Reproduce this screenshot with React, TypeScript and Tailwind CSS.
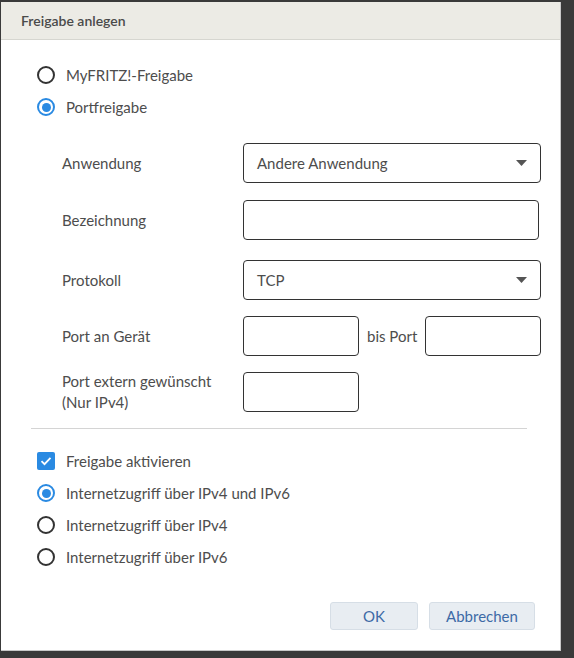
import { ReactNode } from 'react'

function Radio({ checked, children }: { checked?: boolean; children: ReactNode }) {
  return (
    <label className="flex h-8 items-center gap-[11px]">
      <span
        className={`flex h-[18px] w-[18px] items-center justify-center rounded-full border-2 ${
          checked ? 'border-[#2a8ae2]' : 'border-[#333]'
        }`}
      >
        {checked && <span className="h-[9px] w-[9px] rounded-full bg-[#2a8ae2]" />}
      </span>
      <span>{children}</span>
    </label>
  )
}

function Checkbox({ children }: { children: ReactNode }) {
  return (
    <label className="flex h-8 items-center gap-[11px]">
      <span className="flex h-[18px] w-[18px] items-center justify-center rounded-[2px] bg-[#2a8ae2]">
        <svg width="12" height="10" viewBox="0 0 12 10" fill="none">
          <path d="M1.5 5.2 4.5 8.2 10.5 1.8" stroke="white" strokeWidth="1.8" />
        </svg>
      </span>
      <span>{children}</span>
    </label>
  )
}

function Select({ value }: { value: string }) {
  return (
    <div className="flex h-10 w-[298px] items-center justify-between rounded-[4px] border border-[#333] pl-[13px] pr-[13px]">
      <span>{value}</span>
      <svg width="11" height="6" viewBox="0 0 11 6">
        <path d="M0 0h11L5.5 6z" fill="#555" />
      </svg>
    </div>
  )
}

function Field({ width }: { width: string }) {
  return <div className={`h-10 rounded-[4px] border border-[#333] ${width}`} />
}

function Row({ label, children, className = '' }: { label: ReactNode; children: ReactNode; className?: string }) {
  return (
    <div className={`flex items-center ${className}`}>
      <div className="w-[181px] leading-[21px]">{label}</div>
      {children}
    </div>
  )
}

export default function App() {
  return (
    <div className="h-[658px] w-[574px] overflow-hidden bg-[#3a3a3a] pl-px pt-[2px] font-['Lato',sans-serif] text-[15px] text-[#4d4d4d]">
      <div className="flex h-[649px] w-[560px] flex-col border-r border-b border-[#c8c8c8] bg-white">
        <div className="flex h-[38px] items-center border-b border-[#d6d6d0] bg-[#ecebe5] pl-5 text-[14px] font-semibold text-[#4a4a4a]">
          Freigabe anlegen
        </div>

        <div className="pl-[36px] pt-[19px]">
          <Radio>MyFRITZ!-Freigabe</Radio>
          <Radio checked>Portfreigabe</Radio>
        </div>

        <div className="flex flex-col pl-[61px] pt-5">
          <Row label="Anwendung">
            <Select value="Andere Anwendung" />
          </Row>
          <Row label="Bezeichnung" className="mt-[17px]">
            <Field width="w-[296px]" />
          </Row>
          <Row label="Protokoll" className="mt-[20px]">
            <Select value="TCP" />
          </Row>
          <Row label="Port an Gerät" className="mt-4">
            <Field width="w-[116px]" />
            <span className="ml-[8px] mr-[8px]">bis Port</span>
            <Field width="w-[116px]" />
          </Row>
          <Row
            label={
              <>
                Port extern gewünscht
                <br />
                (Nur IPv4)
              </>
            }
            className="mt-[15px]"
          >
            <Field width="w-[116px]" />
          </Row>
        </div>

        <div className="ml-[30px] mt-[15px] h-px w-[496px] bg-[#d4d4d4]" />

        <div className="pl-[36px] pt-4">
          <Checkbox>Freigabe aktivieren</Checkbox>
          <Radio checked>Internetzugriff über IPv4 und IPv6</Radio>
          <Radio>Internetzugriff über IPv4</Radio>
          <Radio>Internetzugriff über IPv6</Radio>
        </div>

        <div className="mt-[29px] flex justify-end gap-[11px] pr-[25px]">
          <button className="h-[28px] w-[88px] rounded-[3px] border border-[#d6dee6] bg-[#e8edf2] text-[#3d6aa6]">
            OK
          </button>
          <button className="h-[28px] w-[106px] rounded-[3px] border border-[#d6dee6] bg-[#e8edf2] text-[#3d6aa6]">
            Abbrechen
          </button>
        </div>
      </div>
    </div>
  )
}
